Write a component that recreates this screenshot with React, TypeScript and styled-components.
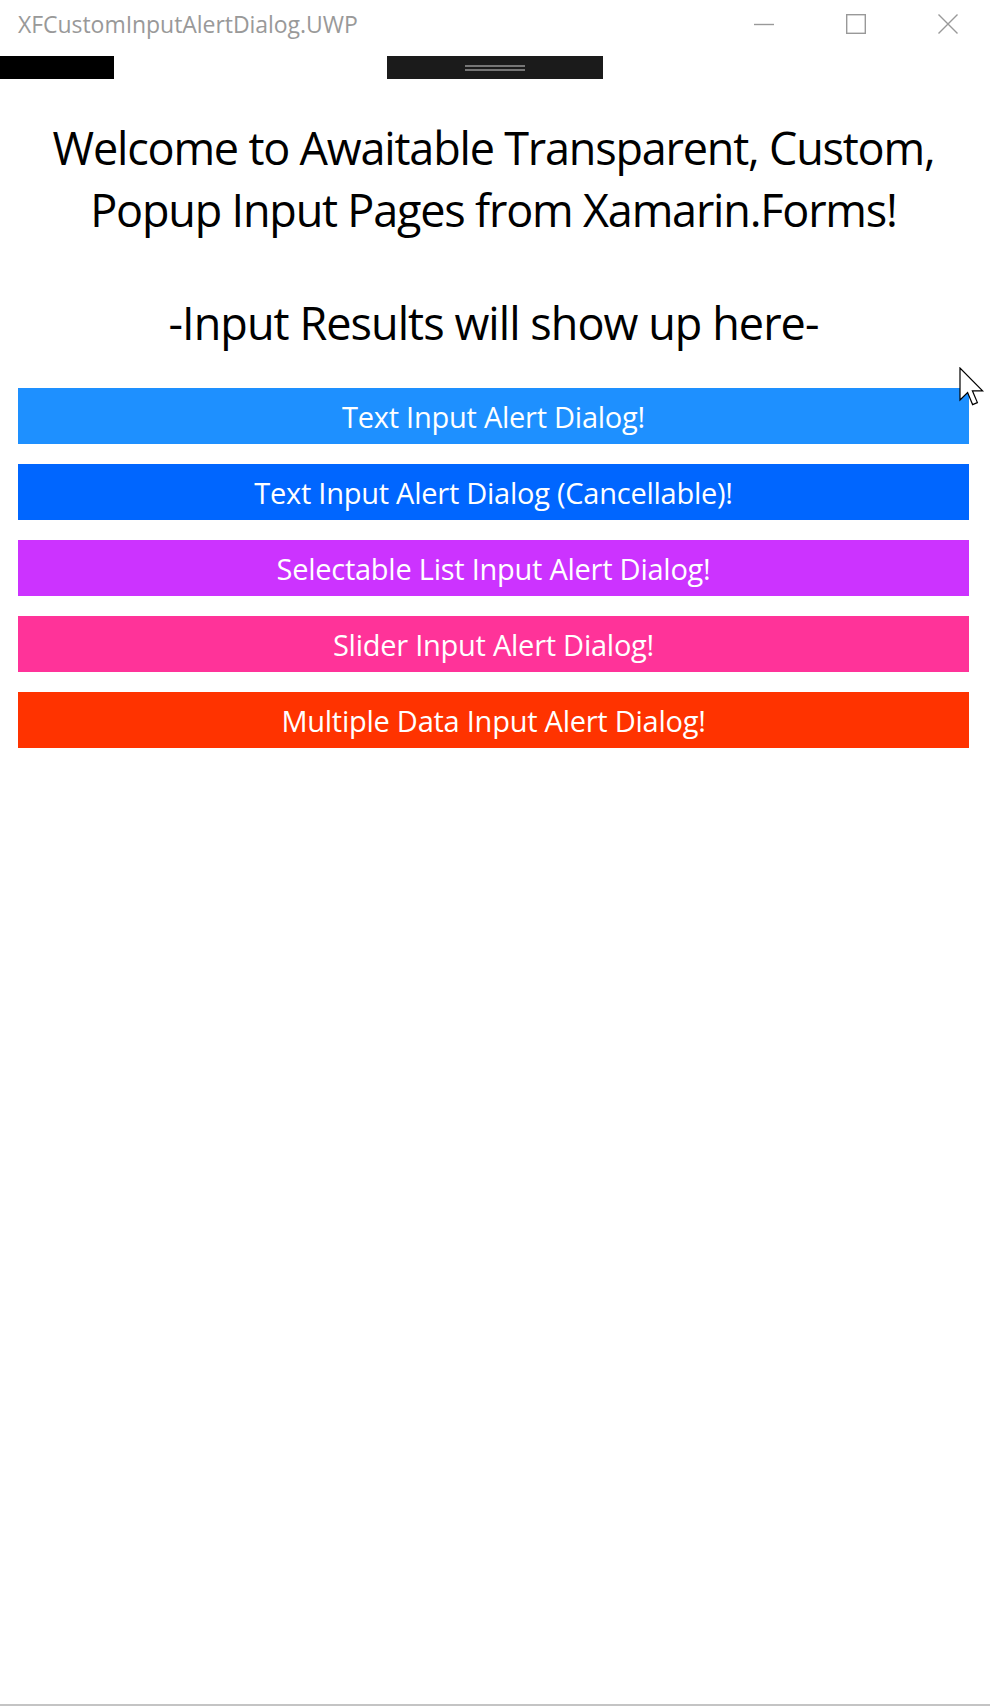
import React from "react";
import styled, { createGlobalStyle } from "styled-components";

const Global = createGlobalStyle`
  html, body { margin: 0; padding: 0; background: #ffffff; }
  body { font-family: "Open Sans", "Noto Sans", sans-serif; }
`;

const Window = styled.div`
  position: relative;
  width: 990px;
  height: 1706px;
  box-sizing: border-box;
  border-bottom: 2px solid #c4c4c4;
  background: #ffffff;
  display: flex;
  flex-direction: column;
  overflow: hidden;
`;

const TitleBar = styled.div`
  height: 50px;
  display: flex;
  align-items: center;
  justify-content: space-between;
  padding-left: 18px;
`;

const TitleText = styled.div`
  font-family: "Open Sans", sans-serif;
  font-size: 23px;
  color: #999999;
  letter-spacing: -0.05px;
  margin-top: -2px;
`;

const Controls = styled.div`
  display: flex;
  gap: 32px;
  padding-right: 12px;
  height: 100%;
`;

const ControlButton = styled.div`
  width: 60px;
  height: 48px;
  display: flex;
  align-items: center;
  justify-content: center;
  color: #999999;
`;

const NavRow = styled.div`
  margin-top: 6px;
  height: 23px;
  display: grid;
  grid-template-columns: 1fr 216px 1fr;
`;

const BlackBlock = styled.div`
  width: 114px;
  height: 23px;
  background: #000000;
`;

const GripBar = styled.div`
  background: #1b1b1b;
  display: flex;
  flex-direction: column;
  align-items: center;
  justify-content: center;
  gap: 2px;
`;

const GripLine = styled.div`
  width: 60px;
  height: 2px;
  background: #767676;
`;

const Content = styled.div`
  display: flex;
  flex-direction: column;
  padding: 38px 21px 0 18px;
`;

const Heading = styled.div<{ $tracking: number }>`
  font-family: "Open Sans", sans-serif;
  font-size: 45px;
  line-height: 62px;
  text-align: center;
  color: #000000;
  letter-spacing: ${(p) => p.$tracking}px;
`;

const HeadingLine = styled.div``;

const ResultLabel = styled(Heading)`
  margin-top: 51px;
`;

const ButtonList = styled.div`
  margin-top: 34px;
  display: flex;
  flex-direction: column;
  gap: 20px;
`;

const ActionButton = styled.button<{ $bg: string }>`
  height: 56px;
  border: none;
  margin: 0;
  padding: 0;
  background: ${(p) => p.$bg};
  color: #ffffff;
  font-family: "Open Sans", sans-serif;
  font-size: 29px;
  letter-spacing: -0.25px;
  display: flex;
  align-items: center;
  justify-content: center;
  cursor: default;
`;

const Cursor = styled.svg`
  position: absolute;
  left: 959px;
  top: 367px;
`;

const buttons = [
  { label: "Text Input Alert Dialog!", bg: "#1e90ff" },
  { label: "Text Input Alert Dialog (Cancellable)!", bg: "#0066ff" },
  { label: "Selectable List Input Alert Dialog!", bg: "#cc33ff" },
  { label: "Slider Input Alert Dialog!", bg: "#ff3399" },
  { label: "Multiple Data Input Alert Dialog!", bg: "#ff3300" },
];

export default function App() {
  return (
    <>
      <Global />
      <Window>
        <TitleBar>
          <TitleText>XFCustomInputAlertDialog.UWP</TitleText>
          <Controls>
            <ControlButton>
              <svg width="20" height="20" viewBox="0 0 20 20">
                <line x1="0" y1="10.5" x2="20" y2="10.5" stroke="#999" strokeWidth="1.4" />
              </svg>
            </ControlButton>
            <ControlButton>
              <svg width="20" height="20" viewBox="0 0 20 20">
                <rect x="0.7" y="0.7" width="18.6" height="18.6" fill="none" stroke="#999" strokeWidth="1.4" />
              </svg>
            </ControlButton>
            <ControlButton>
              <svg width="20" height="20" viewBox="0 0 20 20">
                <path d="M0.5 0.5 L19.5 19.5 M19.5 0.5 L0.5 19.5" stroke="#999" strokeWidth="1.4" fill="none" />
              </svg>
            </ControlButton>
          </Controls>
        </TitleBar>
        <NavRow>
          <div>
            <BlackBlock />
          </div>
          <GripBar>
            <GripLine />
            <GripLine />
          </GripBar>
          <div />
        </NavRow>
        <Content>
          <Heading $tracking={-1.2}>
            <HeadingLine>Welcome to Awaitable Transparent, Custom,</HeadingLine>
            <HeadingLine>Popup Input Pages from Xamarin.Forms!</HeadingLine>
          </Heading>
          <ResultLabel $tracking={-0.95}>-Input Results will show up here-</ResultLabel>
          <ButtonList>
            {buttons.map((b) => (
              <ActionButton key={b.label} $bg={b.bg}>
                {b.label}
              </ActionButton>
            ))}
          </ButtonList>
        </Content>
        <Cursor width="26" height="40" viewBox="0 0 13 20">
          <path
            d="M0.5 0.5 L0.5 16.5 L4.3 12.8 L6.8 18.8 L9.2 17.8 L6.7 11.9 L11.8 11.9 Z"
            fill="#ffffff"
            stroke="#000000"
            strokeWidth="0.6"
            strokeLinejoin="miter"
          />
        </Cursor>
      </Window>
    </>
  );
}
